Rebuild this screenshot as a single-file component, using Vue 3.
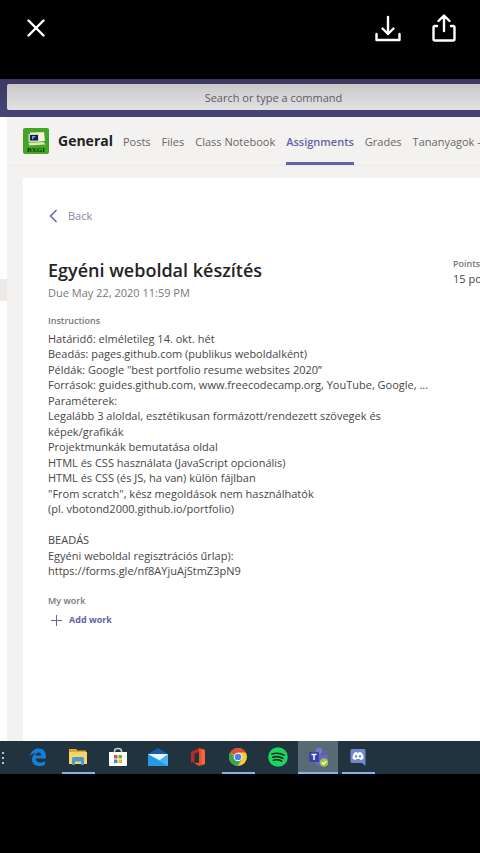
<script setup>
const tabs = [
  { label: 'Posts' },
  { label: 'Files' },
  { label: 'Class Notebook' },
  { label: 'Assignments', active: true },
  { label: 'Grades' },
  { label: 'Tananyagok - Teams' },
]

const instructions = [
  'Határidő: elméletileg 14. okt. hét',
  'Beadás: pages.github.com (publikus weboldalként)',
  'Példák: Google "best portfolio resume websites 2020”',
  'Források: guides.github.com, www.freecodecamp.org, YouTube, Google, ...',
  'Paraméterek:',
  'Legalább 3 aloldal, esztétikusan formázott/rendezett szövegek és',
  'képek/grafikák',
  'Projektmunkák bemutatása oldal',
  'HTML és CSS használata (JavaScript opcionális)',
  'HTML és CSS (és JS, ha van) külön fájlban',
  '"From scratch", kész megoldások nem használhatók',
  '(pl. vbotond2000.github.io/portfolio)',
  '\u00a0',
  'BEADÁS',
  'Egyéni weboldal regisztrációs űrlap):',
  'https://forms.gle/nf8AYjuAjStmZ3pN9',
]
</script>

<template>
  <div class="viewer">
    <header class="viewer-bar">
      <button class="icon-button" type="button" aria-label="Close">
        <svg width="18" height="18" viewBox="0 0 18 18"><path d="M1.5 1.5l15 15M16.500 1.500l-15 15" /></svg>
      </button>
      <span class="spacer"></span>
      <button class="icon-button" type="button" aria-label="Download">
        <svg width="26" height="28" viewBox="0 0 26 28"><path d="M13 3v17M7.500 14.500L13 20l5.500-5.500M1.500 20v6h23v-6" /></svg>
      </button>
      <button class="icon-button" type="button" aria-label="Share">
        <svg width="24" height="28" viewBox="0 0 24 28"><path d="M12 17V2M6.500 7L12 1.500 17.500 7M5 12H3q-1.500 0-1.500 1.500v11.500q0 1.500 1.500 1.500h18q1.500 0 1.500-1.500V13.500q0-1.500-1.500-1.500h-2" /></svg>
      </button>
    </header>

    <div class="title-bar">
      <input class="search" type="text" placeholder="Search or type a command" aria-label="Search or type a command" />
    </div>

    <div class="app">
      <aside class="rail"><span class="rail-selected"></span></aside>
      <main class="main">
        <div class="channel">
          <svg class="team-logo" width="26" height="26" viewBox="0 0 26 26">
            <rect width="26" height="26" rx="2" fill="#45a526" />
            <path d="M7 4.500l14-.5 1 9-15 1.500z" fill="#e9e8c4" />
            <path d="M5.500 6h10v8h-10z" fill="#c9d6cc" />
            <path d="M7 7h8v5.500H7z" fill="#14223a" />
            <path d="M9 8h4l-4 4z" fill="#6aa0d4" />
            <path d="M16 5h5v8h-5z" fill="#f6f3da" />
            <path d="M5.500 15l15-1 2 2.500-16 1z" fill="#e2e6b8" />
            <text x="13" y="24" text-anchor="middle" class="logo-text">BXGI</text>
          </svg>
          <h1 class="channel-name">General</h1>
          <nav class="tabs">
            <a v-for="tab in tabs" :key="tab.label" href="#" class="tab" :class="{ active: tab.active }">{{ tab.label }}</a>
          </nav>
        </div>

        <section class="card">
          <a class="back" href="#">
            <svg width="10" height="14" viewBox="0 0 10 14"><path d="M8.500 1L2.500 7l6 6" /></svg>
            Back
          </a>
          <div class="heading">
            <div>
              <h2 class="title">Egyéni weboldal készítés</h2>
              <p class="due">Due May 22, 2020 11:59 PM</p>
            </div>
            <div class="points">
              <h3 class="label">Points</h3>
              <p class="points-value">15 points possible</p>
            </div>
          </div>
          <h3 class="label">Instructions</h3>
          <div class="instructions">
            <p v-for="(line, i) in instructions" :key="i">{{ line }}</p>
          </div>
          <h3 class="label">My work</h3>
          <button class="add-work" type="button">
            <svg width="15" height="13" viewBox="0 0 15 13"><path d="M8.500 1v11M3 6.500h11" /></svg>
            Add work
          </button>
        </section>
      </main>
    </div>

    <footer class="taskbar">
      <svg class="task-edge" width="6" height="14" viewBox="0 0 6 14"><path d="M2 1h2v2H2zM2 6h2v2H2zM2 11h2v2H2z" fill="#b9c3c8" /></svg>
      <button class="task" type="button" aria-label="Edge">
        <svg width="20" height="20" viewBox="0 0 20 20">
          <path d="M2 9C3 4 6.500 1.500 10.500 1.500c5 0 7.500 3.500 7.500 8v2H7.500c.2 2.800 2.300 4 5 4 1.700 0 3.300-.5 4.500-1.300v3.500c-1.500.8-3.500 1.300-5.500 1.300-4.500 0-7.500-2.600-7.500-6.500 0-2.700 1.500-4.900 4-6.200C5.500 6.500 3.500 7.300 2 9zm5.600-.5h5.800c0-2-1-3-2.800-3-1.700 0-2.700 1.200-3 3z" fill="#1280d8" fill-rule="evenodd" />
        </svg>
      </button>
      <button class="task open" type="button" aria-label="File Explorer">
        <svg width="20" height="20" viewBox="0 0 20 20">
          <path d="M1 2h7l1.500 1.500H18V8H1z" fill="#e0a52f" />
          <path d="M1 5h18v12H1z" fill="#fbd466" />
          <path d="M4 18v-6.500q0-1.500 1.500-1.500h9q1.500 0 1.500 1.500V18h-3v-3.500H7V18z" fill="#4b9bd2" />
        </svg>
      </button>
      <button class="task" type="button" aria-label="Microsoft Store">
        <svg width="20" height="20" viewBox="0 0 20 20">
          <path d="M6.500 6V4Q6.500 1.500 10 1.500T13.500 4v2" fill="none" stroke="#c9d0d4" stroke-width="1.500" />
          <path d="M1 5h18v13q0 1-1 1H2q-1 0-1-1z" fill="#fff" />
          <path d="M6 8h3.500v3.500H6z" fill="#e8512b" /><path d="M10.500 8H14v3.500h-3.500z" fill="#72ad2d" />
          <path d="M6 12.500h3.500V16H6z" fill="#2495d9" /><path d="M10.500 12.500H14V16h-3.500z" fill="#efb51b" />
        </svg>
      </button>
      <button class="task" type="button" aria-label="Mail">
        <svg width="20" height="20" viewBox="0 0 20 20">
          <path d="M0 7l10-6 10 6v3H0z" fill="#155ca7" />
          <path d="M0 7h20v12H0z" fill="#45b4f2" />
          <path d="M0 7l20 12H0z" fill="#259be5" />
          <path d="M0 7h20l-8.500 6.300z" fill="#e8f4fc" />
        </svg>
      </button>
      <button class="task" type="button" aria-label="Office">
        <svg width="20" height="20" viewBox="0 0 20 20">
          <path d="M3 5l8-4v4L6.500 6.500v8L3 16z" fill="#b82b1e" />
          <path d="M11 1l6 2v14l-6 2-6-3.500 6 .5z" fill="#e9502a" />
          <path d="M13.500 2l3.500 1v14l-3.500 1z" fill="#f2683a" />
        </svg>
      </button>
      <button class="task open" type="button" aria-label="Chrome">
        <svg width="20" height="20" viewBox="0 0 20 20">
          <circle cx="10" cy="10" r="9" fill="#f8cb3c" />
          <path d="M10 10L2.200 5.500A9 9 0 0 1 17.800 5.500H10z" fill="#df4b3d" />
          <path d="M2.200 5.500A9 9 0 0 0 9.500 19l4.400-6.800H10z" fill="#3ca454" />
          <circle cx="10" cy="10" r="4.300" fill="#fff" /><circle cx="10" cy="10" r="3.300" fill="#4a86df" />
        </svg>
      </button>
      <button class="task" type="button" aria-label="Spotify">
        <svg width="20" height="20" viewBox="0 0 20 20">
          <circle cx="10" cy="10" r="9.800" fill="#1fd562" />
          <path d="M4 6.900q6.500-1.800 12 1.200M4.800 10.200q5.500-1.500 10 1.100M5.400 13.200q4.500-1.200 8.300.9" fill="none" stroke="#0e2a20" stroke-width="1.600" stroke-linecap="round" />
        </svg>
      </button>
      <button class="task open current" type="button" aria-label="Teams">
        <svg width="20" height="20" viewBox="0 0 20 20">
          <circle cx="11" cy="4" r="3.300" fill="#7479ce" /><circle cx="17" cy="5.500" r="2" fill="#5a60bd" />
          <path d="M6 8h14v5q0 4-4 4-2 3-5.500 2T6 14z" fill="#6268c6" />
          <rect x="1" y="5" width="10" height="10" rx="1" fill="#3c43a6" />
          <path d="M3.500 7.500h5M6 7.500V13" stroke="#fff" stroke-width="1.500" />
          <circle cx="16" cy="15.500" r="4.300" fill="#a5c63b" />
          <path d="M13.800 15.500l1.700 1.700 2.800-3" fill="none" stroke="#fff" stroke-width="1.300" />
        </svg>
      </button>
      <button class="task open" type="button" aria-label="Discord">
        <svg width="20" height="20" viewBox="0 0 20 20">
          <path d="M4 2h12q1.500 0 1.500 1.500V19L14 16H4q-1.500 0-1.500-1.500v-11Q2.500 2 4 2z" fill="#7387cf" />
          <path d="M6 6q1.500-1 2.800-1l.4.700h1.600l.4-.7q1.300 0 2.800 1 1.500 2.500 1.500 5.500-1.200 1.300-3 1.400l-.7-1H8.200l-.7 1q-1.800-.1-3-1.400Q4.500 8.500 6 6z" fill="#fff" />
          <circle cx="8" cy="9.200" r="1.200" fill="#7387cf" /><circle cx="12" cy="9.200" r="1.200" fill="#7387cf" />
        </svg>
      </button>
    </footer>
  </div>
</template>

<style>
body {
  margin: 0;
  background: #000;
}
</style>

<style scoped>
.viewer {
  box-sizing: border-box;
  min-height: 100vh;
  padding-bottom: 79px;
  display: flex;
  flex-direction: column;
  overflow: hidden;
  background: #000;
  font-family: "Open Sans", "Noto Sans", sans-serif;
  font-size: 11px;
  color: #484644;
}
h1, h2, h3, p {
  margin: 0;
}
button {
  padding: 0;
  border: 0;
  background: none;
  font: inherit;
  cursor: pointer;
}
a {
  color: inherit;
  text-decoration: none;
}
svg {
  display: block;
  flex: none;
}
.viewer-bar {
  box-sizing: border-box;
  height: 79px;
  padding: 0 24px 24px 27px;
  display: flex;
  align-items: center;
  gap: 31px;
}
.spacer {
  flex: 1;
}
.icon-button path {
  fill: none;
  stroke: #fff;
  stroke-width: 2.4;
  stroke-linecap: round;
  stroke-linejoin: round;
}
.title-bar {
  padding: 5px 0 7px 7px;
  display: flex;
  background: linear-gradient(#3d3a62, #464477);
}
.search {
  flex: 1;
  box-sizing: border-box;
  height: 26px;
  padding: 0 0 0 60px;
  border: 0;
  border-radius: 2px 0 0 2px;
  background: linear-gradient(#cbc8c7, #e2e1e3);
  text-align: center;
  font: inherit;
}
.search::placeholder {
  color: #5f5d5c;
  opacity: 1;
}
.app {
  flex: 1;
  display: flex;
  background: #f3f2f1;
}
.rail {
  width: 7px;
  flex: none;
  padding-top: 162px;
  background: #fefefe;
}
.rail-selected {
  display: block;
  height: 22px;
  background: #ebeae9;
}
.main {
  flex: 1;
  min-width: 0;
  display: flex;
  flex-direction: column;
  overflow: hidden;
}
.channel {
  height: 48px;
  padding-left: 16px;
  display: flex;
  align-items: center;
  border-bottom: 1px solid #edebe9;
}
.team-logo {
  margin-right: 9px;
}
.logo-text {
  font: bold 7px "Liberation Serif", serif;
  fill: #0f3208;
}
.channel-name {
  margin-right: 10px;
  font-size: 14px;
  line-height: 48px;
  color: #201f1e;
}
.tabs {
  align-self: stretch;
  display: flex;
  gap: 11px;
  white-space: nowrap;
}
.tab {
  line-height: 50px;
  height: 45px;
  color: #686664;
}
.tab.active {
  font-weight: 600;
  color: #6264a7;
  border-bottom: 3px solid #6264a7;
}
.card {
  flex: 1;
  margin: 12px 0 0 16px;
  padding: 29px 0 0 25px;
  background: #fff;
}
.back {
  display: flex;
  align-items: center;
  gap: 10px;
  line-height: 18px;
  color: #8485ae;
}
.back path {
  fill: none;
  stroke: #6264a7;
  stroke-width: 1.500;
}
.heading {
  margin: 31px 0 11px;
  display: flex;
  justify-content: space-between;
  white-space: nowrap;
}
.title {
  font-size: 18px;
  line-height: 28px;
  font-weight: 600;
  color: #252423;
}
.due {
  line-height: 18px;
  color: #797775;
}
.points {
  width: 27px;
  overflow: hidden;
}
.label {
  font-size: 9px;
  line-height: 15px;
  font-weight: 600;
  color: #797775;
}
.points-value {
  line-height: 16px;
}
.instructions {
  margin: 3px 0 14px;
  white-space: nowrap;
}
.instructions p {
  line-height: 15px;
}
.instructions p:nth-child(even) {
  line-height: 16px;
}
.add-work {
  margin-top: 3px;
  display: flex;
  align-items: center;
  gap: 6px;
  font-size: 9px;
  line-height: 18px;
  font-weight: 700;
  color: #6264a7;
}
.add-work path {
  stroke: #6264a7;
}
.taskbar {
  height: 33px;
  padding-right: 80px;
  display: flex;
  align-items: stretch;
  background: #20333f;
}
.task-edge {
  align-self: center;
  margin-right: 12px;
}
.task {
  width: 40px;
  flex: none;
  display: grid;
  place-items: center;
  border-bottom: 2px solid transparent;
}
.task.open {
  background: linear-gradient(#7db8e8, #7db8e8) bottom / 33px 2px no-repeat border-box;
}
.task.open.current {
  background: linear-gradient(#7db8e8, #7db8e8) bottom / 100% 2px no-repeat border-box, #586a74;
}
</style>
